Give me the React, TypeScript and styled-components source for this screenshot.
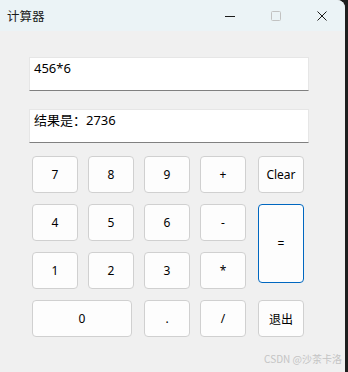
import styled, { createGlobalStyle } from "styled-components";

const GlobalStyle = createGlobalStyle`
  html, body {
    margin: 0;
    padding: 0;
    background: #1e1e1e;
  }
  body {
    font-family: "Noto Sans", "Noto Sans CJK SC", sans-serif;
  }
`;

const Window = styled.div`
  position: relative;
  width: 345px;
  height: 372px;
  background: #f0f0f0;
  border-top-right-radius: 8px;
  overflow: hidden;
  display: flex;
  flex-direction: column;
`;

const TitleBar = styled.div`
  height: 31px;
  background: #ebf3f6;
  display: flex;
  align-items: center;
  padding-left: 7px;
`;

const Title = styled.span`
  flex: 1;
  font-family: "Noto Sans CJK SC", sans-serif;
  font-size: 12.5px;
  color: #1a1a1a;
`;

const Controls = styled.div`
  display: flex;
  align-items: center;
`;

const ControlButton = styled.div`
  width: 46px;
  height: 31px;
  display: flex;
  align-items: center;
  justify-content: center;
`;

const Content = styled.div`
  padding: 26px 36px 0 29px;
  display: flex;
  flex-direction: column;
`;

const Field = styled.div<{ $gap?: number }>`
  box-sizing: border-box;
  height: 34px;
  background: #ffffff;
  border: 1px solid #e6e6e6;
  border-bottom: 1px solid #808080;
  padding: 1px 4px 0;
  margin-bottom: ${(p) => p.$gap ?? 0}px;
  font-family: "Noto Sans", "Noto Sans CJK SC", sans-serif;
  font-size: 13px;
  line-height: 18px;
  color: #000;
`;

const Keypad = styled.div`
  display: grid;
  grid-template-columns: 46px 46px 46px 46px 48px;
  grid-auto-rows: 37px;
  column-gap: 10px;
  row-gap: 11px;
  padding-left: 3px;
`;

const Key = styled.button<{ $wide?: boolean; $tall?: boolean; $side?: boolean }>`
  box-sizing: border-box;
  width: ${(p) => (p.$wide ? "100px" : "46px")};
  height: ${(p) => (p.$tall ? "79px" : "37px")};
  grid-column: ${(p) => (p.$wide ? "span 2" : "auto")};
  grid-row: ${(p) => (p.$tall ? "span 2" : "auto")};
  justify-self: ${(p) => (p.$side ? "end" : "start")};
  align-self: start;
  background: #fdfdfd;
  border: 1px solid ${(p) => (p.$tall ? "#0067c0" : "#d0d0d0")};
  border-radius: 4px;
  padding: 0;
  font-family: "Noto Sans", "Noto Sans CJK SC", sans-serif;
  font-size: 12px;
  color: #000;
`;

const Watermark = styled.div`
  position: absolute;
  right: 3px;
  bottom: 6px;
  font-family: "Noto Sans CJK SC", sans-serif;
  font-size: 10px;
  color: #c4c4c4;
`;

export default function App() {
  return (
    <>
      <GlobalStyle />
      <Window>
        <TitleBar>
          <Title>计算器</Title>
          <Controls>
            <ControlButton>
              <svg width="10" height="10" viewBox="0 0 10 10">
                <path d="M0 5.5h10" stroke="#1a1a1a" strokeWidth="1" />
              </svg>
            </ControlButton>
            <ControlButton>
              <svg width="10" height="10" viewBox="0 0 10 10">
                <rect x="0.5" y="0.5" width="9" height="9" rx="1" fill="none" stroke="#c2c2c2" />
              </svg>
            </ControlButton>
            <ControlButton>
              <svg width="10" height="10" viewBox="0 0 10 10">
                <path d="M0.5 0.5l9 9M9.5 0.5l-9 9" stroke="#1a1a1a" strokeWidth="1" />
              </svg>
            </ControlButton>
          </Controls>
        </TitleBar>
        <Content>
          <Field $gap={18}>456*6</Field>
          <Field $gap={13}>结果是：2736</Field>
          <Keypad>
            <Key>7</Key>
            <Key>8</Key>
            <Key>9</Key>
            <Key>+</Key>
            <Key $side>Clear</Key>
            <Key>4</Key>
            <Key>5</Key>
            <Key>6</Key>
            <Key>-</Key>
            <Key $side $tall>=</Key>
            <Key>1</Key>
            <Key>2</Key>
            <Key>3</Key>
            <Key>*</Key>
            <Key $wide>0</Key>
            <Key>.</Key>
            <Key>/</Key>
            <Key $side>退出</Key>
          </Keypad>
        </Content>
        <Watermark>CSDN @沙茶卡洛</Watermark>
      </Window>
    </>
  );
}
